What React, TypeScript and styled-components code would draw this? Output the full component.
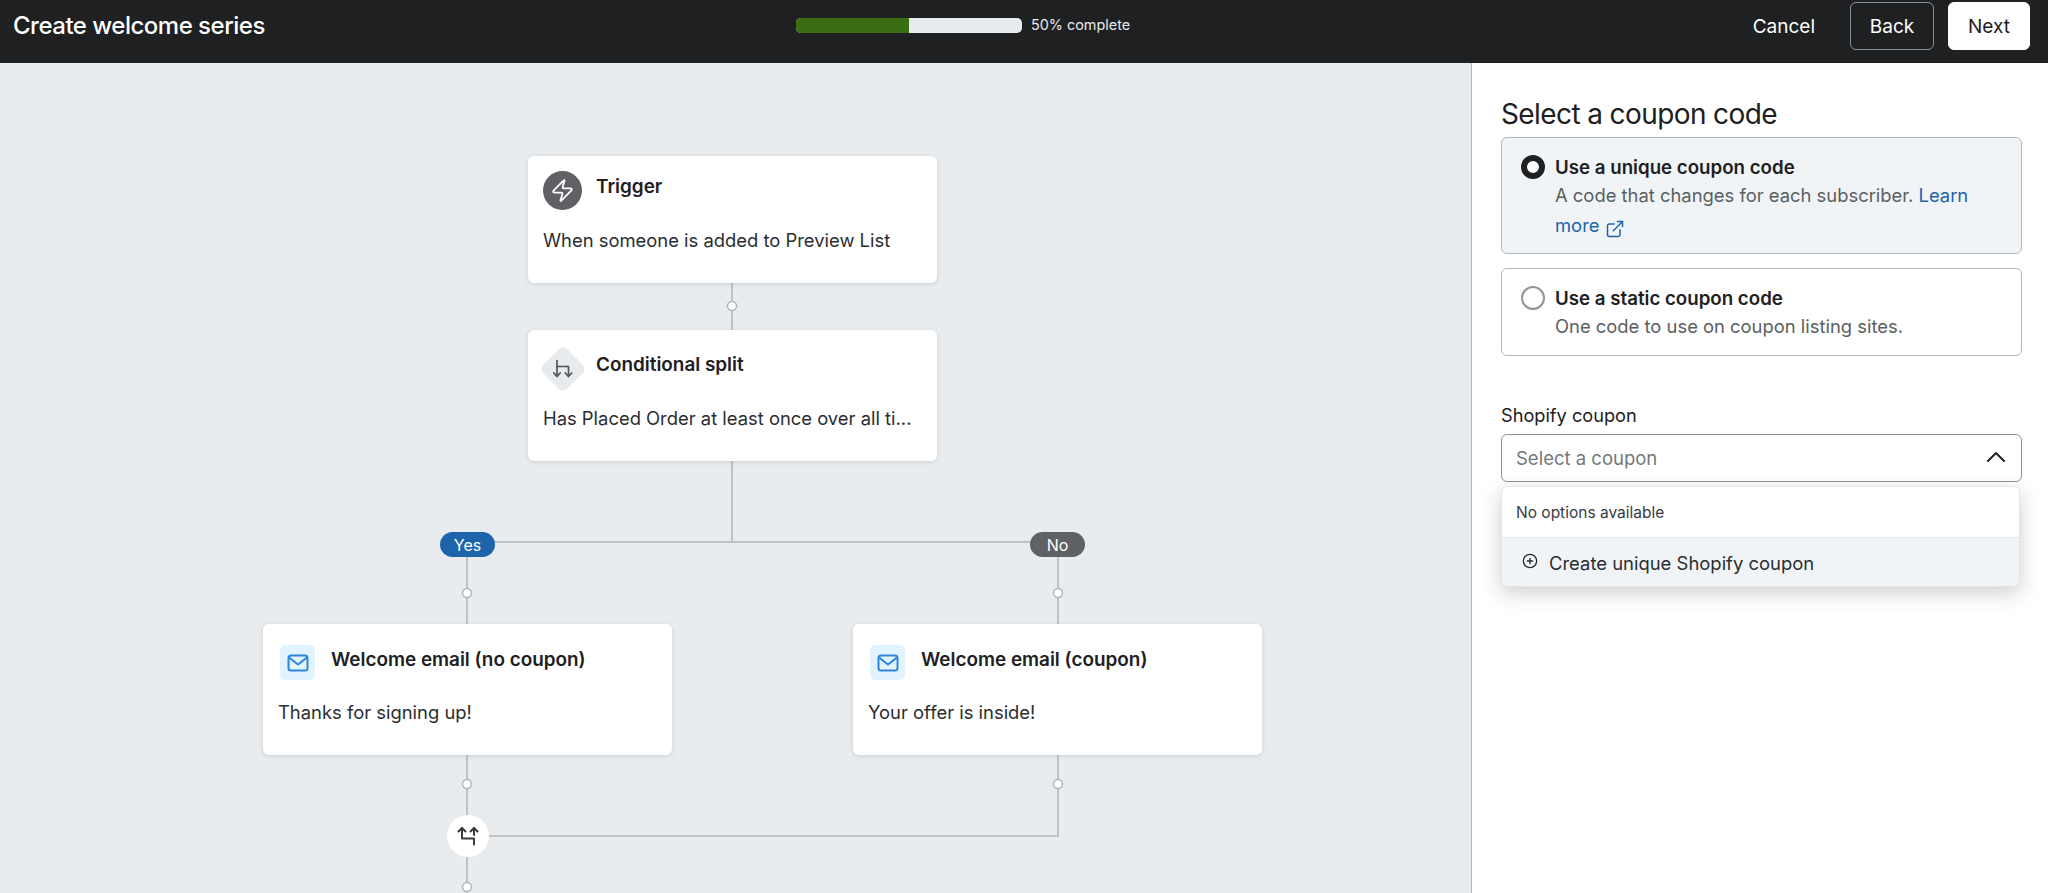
import styled, { createGlobalStyle } from "styled-components";
import { ChevronUp, CirclePlus, ExternalLink, Zap } from "lucide-react";

const GlobalStyle = createGlobalStyle`
  html, body {
    margin: 0;
    padding: 0;
    height: 100%;
    overflow: hidden;
    background: #fff;
    font-family: Inter, "Liberation Sans", sans-serif;
    color: #1e2022;
  }
  * { box-sizing: border-box; }
`;

const Page = styled.div`
  width: 2048px;
  height: 893px;
  display: flex;
  flex-direction: column;
  overflow: hidden;
`;

const Header = styled.header`
  height: 63px;
  flex: none;
  background: #1e2022;
  color: #fff;
  display: grid;
  grid-template-columns: 796px 1fr auto;
  padding: 1px 18px 14px 0;
`;

const Title = styled.h1`
  margin: 0;
  padding-left: 13px;
  font-size: 24px;
  letter-spacing: -0.5px;
  line-height: 49px;
  font-weight: 500;
`;

const Progress = styled.div`
  display: flex;
  align-items: center;
  gap: 9px;
  height: 48px;
`;

const Track = styled.div`
  width: 226px;
  height: 15px;
  border-radius: 5px;
  background: #e8ebee;
  overflow: hidden;
`;

const Fill = styled.div<{ $value: number }>`
  width: ${(p) => p.$value}%;
  height: 100%;
  background: #3a6e13;
`;

const ProgressText = styled.span`
  margin-top: -2px;
  font-size: 14.4px;
  color: #e8ebee;
`;

const Actions = styled.div`
  display: flex;
  align-items: center;
  gap: 14px;
`;

const Cancel = styled.button`
  margin-right: 21px;
  padding: 2px 0 0;
  border: 0;
  background: none;
  color: #fff;
  font: 400 19px Inter, sans-serif;
`;

const ActionButton = styled.button<{ $solid?: boolean }>`
  height: 48px;
  width: ${(p) => (p.$solid ? "82px" : "84px")};
  padding: 2px 0 0;
  border-radius: 6px;
  border: 1px solid ${(p) => (p.$solid ? "#fff" : "#8b9095")};
  background: ${(p) => (p.$solid ? "#fff" : "transparent")};
  color: ${(p) => (p.$solid ? "#1e2022" : "#fff")};
  font: 400 19px Inter, sans-serif;
`;

const Body = styled.div`
  flex: 1;
  display: flex;
  min-height: 0;
`;

const Canvas = styled.main`
  position: relative;
  flex: 1;
  background: #e9ecef;
  overflow: hidden;
`;

const Wires = styled.svg`
  position: absolute;
  left: 0;
  top: 0;
`;

const Node = styled.div<{ $x: number; $y: number; $h: number }>`
  position: absolute;
  left: ${(p) => p.$x}px;
  top: ${(p) => p.$y}px;
  width: 409px;
  height: ${(p) => p.$h}px;
  padding: 15px 15px 0;
  background: #fff;
  border-radius: 6px;
  box-shadow: 0 1px 4px rgba(30, 32, 34, 0.14);
`;

const NodeHead = styled.div`
  display: flex;
  align-items: flex-start;
  gap: 14px;
  height: 39px;
`;

const NodeTitle = styled.div<{ $top: number; $left?: number }>`
  margin-left: ${(p) => p.$left ?? 0}px;
  padding-top: ${(p) => p.$top}px;
  font-size: 18.9px;
  line-height: 24px;
  font-weight: 600;
`;

const NodeText = styled.div<{ $top: number }>`
  margin-top: ${(p) => p.$top}px;
  font-size: 18.4px;
  line-height: 26px;
  white-space: nowrap;
  color: #2b2e31;
`;

const TriggerIcon = styled.div`
  width: 39px;
  height: 39px;
  flex: none;
  border-radius: 50%;
  background: #5f6164;
  color: #fff;
  display: flex;
  align-items: center;
  justify-content: center;
`;

const SplitIcon = styled.div`
  width: 39px;
  height: 39px;
  margin-top: 4px;
  flex: none;
  display: flex;
  align-items: center;
  justify-content: center;
  position: relative;
  color: #505457;
  &::before {
    content: "";
    position: absolute;
    left: 2.5px;
    top: 2.5px;
    width: 34px;
    height: 34px;
    border-radius: 6px;
    background: #e8ebee;
    transform: rotate(45deg);
  }
  svg { position: relative; }
`;

const MailBox = styled.div`
  width: 35px;
  height: 35px;
  margin: 6px 0 0 2px;
  flex: none;
  border-radius: 6px;
  background: #e1f3ff;
  color: #2f86d8;
  display: flex;
  align-items: center;
  justify-content: center;
`;

const Pill = styled.div<{ $x: number; $yes?: boolean }>`
  position: absolute;
  left: ${(p) => p.$x}px;
  top: 469px;
  width: 55px;
  height: 25px;
  border-radius: 13px;
  background: ${(p) => (p.$yes ? "#1d64ab" : "#5f6164")};
  color: #fff;
  font-size: 16px;
  line-height: 27px;
  text-align: center;
`;

const MergeBadge = styled.div`
  position: absolute;
  left: 447px;
  top: 752px;
  width: 42px;
  height: 42px;
  border-radius: 50%;
  background: #fff;
  color: #373c40;
  display: flex;
  align-items: center;
  justify-content: center;
`;

const Panel = styled.aside`
  width: 577px;
  flex: none;
  background: #fff;
  border-left: 1px solid #b4b9bd;
  padding: 33px 26px 0 29px;
`;

const PanelTitle = styled.h2`
  margin: 0 0 5px;
  font-size: 28px;
  letter-spacing: -0.6px;
  line-height: 36px;
  font-weight: 400;
`;

const Options = styled.div`
  display: flex;
  flex-direction: column;
  gap: 14px;
`;

const Option = styled.label<{ $active?: boolean }>`
  display: flex;
  gap: 10px;
  min-height: ${(p) => (p.$active ? "117px" : "88px")};
  padding: 14px 19px 11px;
  border: 1px solid #b4b9bd;
  border-radius: 6px;
  background: ${(p) => (p.$active ? "#f1f4f6" : "#fff")};
`;

const Radio = styled.span<{ $active?: boolean }>`
  width: 24px;
  height: 24px;
  margin-top: 3px;
  flex: none;
  border-radius: 50%;
  background: #fff;
  border: ${(p) => (p.$active ? "6px solid #1e2022" : "2px solid #8f9498")};
`;

const OptionBody = styled.div`
  font-size: 18.4px;
  line-height: 29.5px;
`;

const OptionTitle = styled.div`
  padding-top: 3px;
  font-size: 18.7px;
  line-height: 26px;
  font-weight: 600;
`;

const OptionText = styled.div`
  color: #5a5f63;
`;

const LearnMore = styled.a`
  color: #1d64ab;
  svg {
    margin: -4px 0 -4px 6px;
    vertical-align: -3px;
  }
`;

const Field = styled.div`
  position: relative;
  margin-top: 48px;
`;

const FieldLabel = styled.div`
  margin-bottom: 6px;
  font-size: 18.2px;
  line-height: 23px;
`;

const Select = styled.div`
  height: 48px;
  margin-top: 7px;
  padding: 0 9px 0 14px;
  border: 1px solid #8f9498;
  border-radius: 6px;
  display: flex;
  align-items: center;
  justify-content: space-between;
  font-size: 18.5px;
  color: #73787c;
  svg {
    margin-top: -3px;
    color: #1e2022;
  }
`;

const Menu = styled.div`
  position: absolute;
  left: 0;
  right: 2px;
  top: calc(100% + 4px);
  height: 101px;
  border: 1px solid #e3e6e9;
  border-radius: 6px;
  background: #fff;
  box-shadow: 0 6px 20px rgba(30, 32, 34, 0.22);
  overflow: hidden;
`;

const MenuNote = styled.div`
  height: 51px;
  padding: 0 14px;
  display: flex;
  align-items: center;
  font-size: 15.5px;
  color: #373c40;
  border-bottom: 1px solid #e3e6e9;
`;

const MenuAction = styled.div`
  height: 49px;
  padding: 0 0 0 20px;
  display: flex;
  align-items: center;
  gap: 11px;
  background: #f1f4f6;
  font-size: 18.45px;
  color: #2b2e31;
  svg { margin-top: -3px; flex: none; }
`;

const Mail = () => (
  <svg width="22" height="18" viewBox="0 0 22 18" fill="none" stroke="currentColor" strokeWidth="2" strokeLinejoin="round" strokeLinecap="round">
    <rect x="1.5" y="1.5" width="19" height="15" rx="2.5" />
    <path d="M2 3.5 11 10.5 20 3.5" />
  </svg>
);

const SplitGlyph = () => (
  <svg width="22" height="19" viewBox="0 0 22 19" fill="none" stroke="currentColor" strokeWidth="1.7" strokeLinejoin="round" strokeLinecap="round">
    <path d="M5 1.500V7.500H16.500V17" />
    <path d="M5 7.500V17" />
    <path d="M1.800 14 5 17.500 8.200 14" />
    <path d="M13.300 14 16.500 17.500 19.700 14" />
  </svg>
);

const MergeGlyph = () => (
  <svg width="22" height="20" viewBox="0 0 22 20" fill="none" stroke="currentColor" strokeWidth="2" strokeLinejoin="round" strokeLinecap="round">
    <path d="M5 2V12.500H17V18.500" />
    <path d="M17 2V9" />
    <path d="M1.500 5.500 5 2 8.500 5.500" />
    <path d="M13.500 5.500 17 2 20.500 5.500" />
  </svg>
);

const dots = [
  [732, 243],
  [467, 530],
  [1058, 530],
  [467, 721],
  [1058, 721],
  [467, 824],
];

const Flow = () => (
  <Wires width="1471" height="830" fill="none">
    <g stroke="#b0b5b8" strokeWidth="1.5">
      <path d="M732 220V267" />
      <path d="M732 398V479" />
      <path d="M467 479H1058" />
      <path d="M467 480V561" />
      <path d="M1058 480V561" />
      <path d="M467 692V830" />
      <path d="M1058 692V773H467" />
    </g>
    {dots.map(([cx, cy]) => (
      <circle key={`${cx}-${cy}`} cx={cx} cy={cy} r="4.5" fill="#fff" stroke="#b0b5b8" strokeWidth="1.5" />
    ))}
  </Wires>
);

export default function App() {
  return (
    <Page>
      <GlobalStyle />
      <Header>
        <Title>Create welcome series</Title>
        <Progress>
          <Track>
            <Fill $value={50} />
          </Track>
          <ProgressText>50% complete</ProgressText>
        </Progress>
        <Actions>
          <Cancel>Cancel</Cancel>
          <ActionButton>Back</ActionButton>
          <ActionButton $solid>Next</ActionButton>
        </Actions>
      </Header>
      <Body>
        <Canvas>
          <Flow />
          <Node $x={528} $y={93} $h={127}>
            <NodeHead>
              <TriggerIcon>
                <Zap size={25} strokeWidth={1.7} />
              </TriggerIcon>
              <NodeTitle $top={4}>Trigger</NodeTitle>
            </NodeHead>
            <NodeText $top={17}>When someone is added to Preview List</NodeText>
          </Node>
          <Node $x={528} $y={267} $h={131}>
            <NodeHead>
              <SplitIcon>
                <SplitGlyph />
              </SplitIcon>
              <NodeTitle $top={8}>Conditional split</NodeTitle>
            </NodeHead>
            <NodeText $top={21}>Has Placed Order at least once over all ti...</NodeText>
          </Node>
          <Pill $x={440} $yes>Yes</Pill>
          <Pill $x={1030}>No</Pill>
          <Node $x={263} $y={561} $h={131}>
            <NodeHead>
              <MailBox>
                <Mail />
              </MailBox>
              <NodeTitle $top={9} $left={2}>Welcome email (no coupon)</NodeTitle>
            </NodeHead>
            <NodeText $top={21}>Thanks for signing up!</NodeText>
          </Node>
          <Node $x={853} $y={561} $h={131}>
            <NodeHead>
              <MailBox>
                <Mail />
              </MailBox>
              <NodeTitle $top={9} $left={2}>Welcome email (coupon)</NodeTitle>
            </NodeHead>
            <NodeText $top={21}>Your offer is inside!</NodeText>
          </Node>
          <MergeBadge>
            <MergeGlyph />
          </MergeBadge>
        </Canvas>
        <Panel>
          <PanelTitle>Select a coupon code</PanelTitle>
          <Options>
            <Option $active>
              <Radio $active />
              <OptionBody>
                <OptionTitle>Use a unique coupon code</OptionTitle>
                <OptionText>
                  A code that changes for each subscriber. <LearnMore>Learn</LearnMore>{" "}
                  <LearnMore>
                    more
                    <ExternalLink size={20} strokeWidth={1.8} />
                  </LearnMore>
                </OptionText>
              </OptionBody>
            </Option>
            <Option>
              <Radio />
              <OptionBody>
                <OptionTitle>Use a static coupon code</OptionTitle>
                <OptionText>One code to use on coupon listing sites.</OptionText>
              </OptionBody>
            </Option>
          </Options>
          <Field>
            <FieldLabel>Shopify coupon</FieldLabel>
            <Select>
              Select a coupon
              <ChevronUp size={32} strokeWidth={1.5} />
            </Select>
            <Menu>
              <MenuNote>No options available</MenuNote>
              <MenuAction>
                <CirclePlus size={16} strokeWidth={2} />
                Create unique Shopify coupon
              </MenuAction>
            </Menu>
          </Field>
        </Panel>
      </Body>
    </Page>
  );
}
